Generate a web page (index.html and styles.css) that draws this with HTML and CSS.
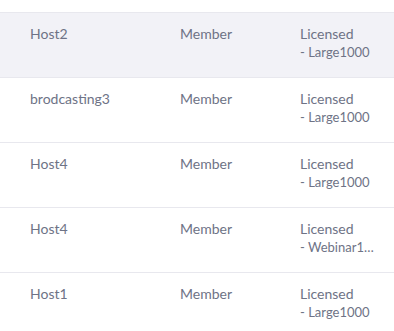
FILE: index.html
```html
<!DOCTYPE html>
<html lang="en">
<head>
    <meta charset="UTF-8">
    <meta name="viewport" content="width=device-width, initial-scale=1.0">
    <title>Users</title>
    <link rel="stylesheet" href="styles.css">
</head>
<body>
    <table class="user-table">
        <tbody>
            <tr class="active">
                <td class="name">Host2</td>
                <td class="role">Member</td>
                <td class="type">Licensed<span class="plan">- Large1000</span></td>
            </tr>
            <tr>
                <td class="name">brodcasting3</td>
                <td class="role">Member</td>
                <td class="type">Licensed<span class="plan">- Large1000</span></td>
            </tr>
            <tr>
                <td class="name">Host4</td>
                <td class="role">Member</td>
                <td class="type">Licensed<span class="plan">- Large1000</span></td>
            </tr>
            <tr>
                <td class="name">Host4</td>
                <td class="role">Member</td>
                <td class="type">Licensed<span class="plan">- Webinar1000</span></td>
            </tr>
            <tr>
                <td class="name">Host1</td>
                <td class="role">Member</td>
                <td class="type">Licensed<span class="plan">- Large1000</span></td>
            </tr>
        </tbody>
    </table>
</body>
</html>
```

FILE: styles.css
```css
* {
    margin: 0;
    padding: 0;
    box-sizing: border-box;
}

body {
    background: #fff;
    font-family: Lato, "Open Sans", sans-serif;
    font-size: 14px;
    color: #6e7386;
    padding-top: 12px;
    overflow: hidden;
}

.user-table {
    width: 100%;
    border-collapse: collapse;
    table-layout: fixed;
}

.user-table tr {
    border-top: 1px solid #e8e8ee;
    height: 65px;
}

.user-table tr.active {
    background: #f2f2f7;
}

.user-table td {
    vertical-align: top;
    padding-top: 12px;
    line-height: 18px;
}

.name {
    width: 180px;
    padding-left: 30px;
}

.role {
    width: 120px;
}

.type {
    width: 94px;
}

.plan {
    display: block;
    max-width: 76px;
    font-size: 13px;
    white-space: nowrap;
    overflow: hidden;
    text-overflow: ellipsis;
}
```
